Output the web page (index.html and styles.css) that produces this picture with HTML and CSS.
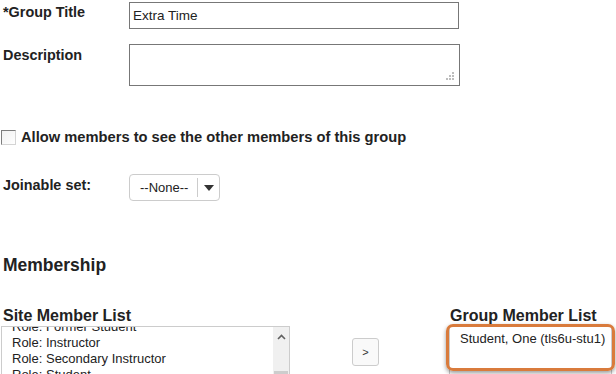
FILE: index.html
```html
<!DOCTYPE html>
<html lang="en">
<head>
  <meta charset="UTF-8" />
  <title>Edit Group</title>
  <link rel="stylesheet" href="styles.css">
</head>
<body>
  <div class="page">
    <form class="group-form">
      <div class="field">
        <label class="field-label" for="groupTitle">*Group Title</label>
        <input class="text-input" id="groupTitle" type="text" value="Extra Time" />
      </div>
      <div class="field field-desc">
        <label class="field-label" for="groupDesc">Description</label>
        <div class="area-wrap">
          <textarea class="text-area" id="groupDesc"></textarea>
          <svg class="grip" width="9" height="9" viewBox="0 0 9 9">
            <rect x="6" y="0" width="2" height="2" />
            <rect x="3" y="3" width="2" height="2" />
            <rect x="6" y="3" width="2" height="2" />
            <rect x="0" y="6" width="2" height="2" />
            <rect x="3" y="6" width="2" height="2" />
            <rect x="6" y="6" width="2" height="2" />
          </svg>
        </div>
      </div>
      <div class="check-row">
        <span class="check-box"></span>
        <label class="check-label">Allow members to see the other members of this group</label>
      </div>
      <div class="field field-join">
        <label class="field-label">Joinable set:</label>
        <div class="select-box">
          <span class="select-text">--None--</span>
          <span class="select-divider"></span>
          <span class="select-arrow"></span>
        </div>
      </div>
    </form>

    <h2 class="section-title">Membership</h2>

    <div class="members">
      <div class="member-col site-col">
        <h3 class="list-title">Site Member List</h3>
        <div class="list-box">
          <div class="list-scroll">
            <div class="list-item">Role: Former Student</div>
            <div class="list-item">Role: Instructor</div>
            <div class="list-item">Role: Secondary Instructor</div>
            <div class="list-item">Role: Student</div>
            <div class="list-item">Role: Teaching Assistant</div>
          </div>
          <div class="scrollbar">
            <svg class="scroll-up" width="9" height="6" viewBox="0 0 9 6">
              <path d="M1 5 L4.5 1.5 L8 5" fill="none" stroke="#606060" stroke-width="1.6" />
            </svg>
            <span class="scroll-thumb"></span>
          </div>
        </div>
      </div>

      <div class="move-col">
        <button class="move-btn" type="button">&gt;</button>
      </div>

      <div class="member-col group-col">
        <h3 class="list-title">Group Member List</h3>
        <div class="list-box group-box">
          <div class="list-item">Student, One (tls6u-stu1)</div>
        </div>
        <span class="highlight"></span>
      </div>
    </div>
  </div>
</body>
</html>
```

FILE: styles.css
```css
html, body {
  overflow: hidden;
}
body {
  margin: 0;
  font-family: 'Liberation Sans', Arial, sans-serif;
  font-size: 13px;
  color: #222;
  background: #fff;
}
.page {
  padding: 2px 0 0 3px;
}
.field {
  display: flex;
  align-items: flex-start;
}
.field-label {
  width: 126px;
  flex: none;
  font-size: 14.4px;
  font-weight: bold;
  line-height: 16px;
  padding-top: 2px;
}
.text-input {
  box-sizing: border-box;
  width: 330px;
  height: 27px;
  margin: 0;
  border: 1px solid #777;
  padding: 0 3px;
  font-family: 'Liberation Sans', Arial, sans-serif;
  font-size: 13.5px;
  color: #222;
  outline: none;
}
.field-desc {
  margin-top: 15px;
}
.field-desc .field-label,
.field-join .field-label {
  padding-top: 3px;
}
.area-wrap {
  position: relative;
}
.text-area {
  display: block;
  box-sizing: border-box;
  width: 331px;
  height: 42px;
  margin: 0;
  border: 1px solid #777;
  resize: none;
  outline: none;
}
.grip {
  position: absolute;
  right: 5px;
  bottom: 5px;
  fill: #bdbdbd;
}
.check-row {
  display: flex;
  align-items: flex-start;
  margin: 43px 0 0 -2px;
}
.check-box {
  box-sizing: border-box;
  width: 15px;
  height: 15px;
  margin-top: 1px;
  border: 1px solid;
  border-color: #7d7d7d #d4d4d4 #d4d4d4 #7d7d7d;
  background: linear-gradient(to bottom right, #f1f1f1, #fff);
}
.check-label {
  margin-left: 5px;
  font-size: 14.7px;
  font-weight: bold;
  line-height: 16px;
}
.field-join {
  margin-top: 29px;
}
.select-box {
  box-sizing: border-box;
  width: 91px;
  height: 27px;
  border: 1px solid #ccc;
  border-radius: 4px;
  display: flex;
  align-items: center;
  padding-left: 10px;
}
.select-text {
  line-height: 15px;
  color: #222;
}
.select-divider {
  width: 1px;
  height: 19px;
  margin-left: 9px;
  background: #ccc;
}
.select-arrow {
  margin-left: 6px;
  border-left: 5px solid transparent;
  border-right: 5px solid transparent;
  border-top: 6px solid #333;
}
.section-title {
  margin: 54px 0 0;
  font-size: 17.5px;
  line-height: 20px;
}
.members {
  display: flex;
  align-items: flex-start;
  margin-top: 33px;
}
.member-col {
  position: relative;
}
.list-title {
  margin: 0 0 2px;
  font-size: 16px;
  line-height: 16px;
}
.site-col {
  width: 289px;
  margin-left: -2px;
}
.site-col .list-title {
  padding-left: 2px;
}
.list-box {
  box-sizing: border-box;
  height: 80px;
  border: 1px solid #ccc;
  display: flex;
  overflow: hidden;
}
.list-scroll {
  flex: 1;
  margin-top: -8px;
  padding-left: 10px;
}
.list-item {
  line-height: 16px;
  white-space: nowrap;
}
.scrollbar {
  position: relative;
  width: 16px;
  flex: none;
  background: #f0f0f0;
}
.scroll-up {
  position: absolute;
  left: 4px;
  top: 7px;
}
.scroll-thumb {
  position: absolute;
  left: 1px;
  right: 1px;
  top: 44px;
  height: 30px;
  background: #cdcdcd;
}
.move-col {
  margin-left: 62px;
  padding-top: 30px;
}
.move-btn {
  box-sizing: border-box;
  width: 27px;
  height: 28px;
  padding: 0;
  border: 1px solid #ccc;
  border-radius: 3px;
  background: #f9f9f9;
  font-family: 'Liberation Sans', Arial, sans-serif;
  font-size: 11px;
  color: #333;
}
.group-col {
  width: 163px;
  margin-left: 70px;
}
.group-col .list-title {
  padding-left: 1px;
}
.group-box {
  height: 60px;
  padding: 4px 0 0 10px;
}
.highlight {
  position: absolute;
  left: -3px;
  top: 16px;
  box-sizing: border-box;
  width: 169px;
  height: 47px;
  border: 3px solid #d97b3c;
  border-radius: 7px;
  box-shadow: 0 2px 4px rgba(0, 0, 0, 0.4);
}
```
